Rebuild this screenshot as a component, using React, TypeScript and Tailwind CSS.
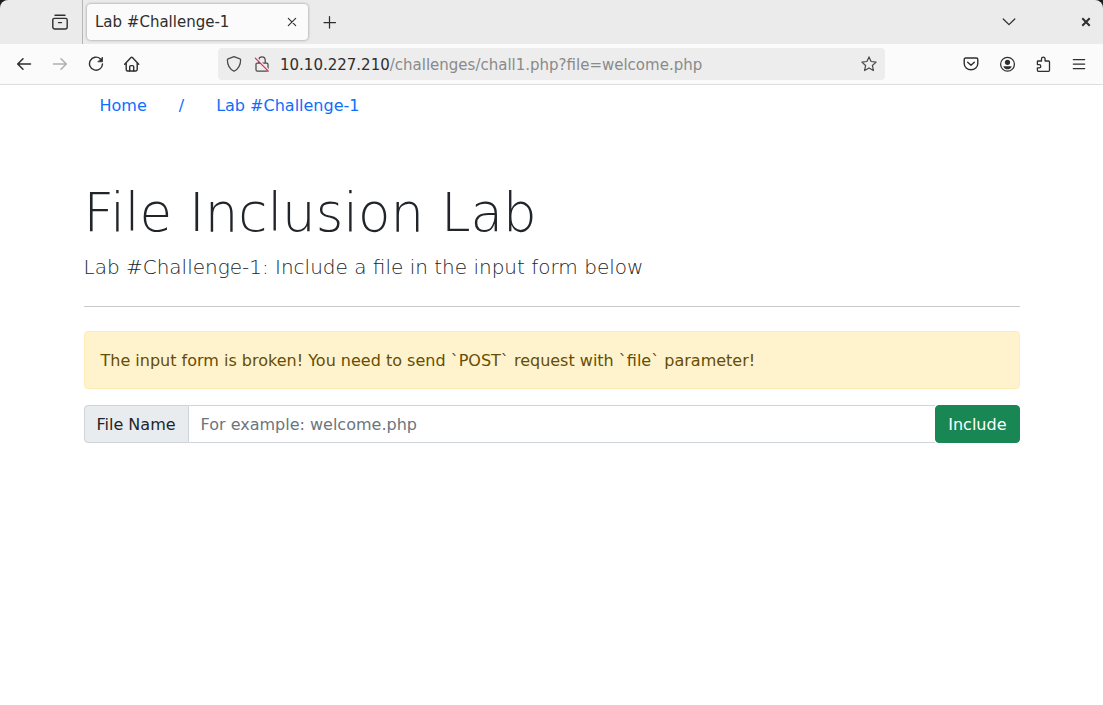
import type { ReactNode } from "react";

function Icon({ children, width = 1.25 }: { children: ReactNode; width?: number }) {
  return (
    <svg
      viewBox="0 0 16 16"
      className="size-4 shrink-0"
      fill="none"
      stroke="currentColor"
      strokeWidth={width}
      strokeLinecap="round"
      strokeLinejoin="round"
      aria-hidden="true"
    >
      {children}
    </svg>
  );
}

function ToolButton({ label, disabled, children }: { label: string; disabled?: boolean; children: ReactNode }) {
  return (
    <button
      type="button"
      aria-label={label}
      disabled={disabled}
      className="flex h-8 w-9 items-center justify-center text-[#2e2e2e] disabled:text-[#b0b0b0]"
    >
      {children}
    </button>
  );
}

function TabStrip() {
  return (
    <div className="bg-[#1c1c1c]">
      <div className="flex h-11 items-center rounded-t-lg bg-[#ebebeb] text-[#2e2e2e]">
        <div className="flex h-full w-[83px] items-center justify-end border-r border-[#b5b5b5] pr-[14px]">
          <button type="button" aria-label="Firefox View">
            <Icon width={1.4}>
              <path d="M3 1.200h10" />
              <path d="M.8 6a1.600 1.600 0 0 1 1.600-1.600h11.200A1.600 1.600 0 0 1 15.200 6v7a2 2 0 0 1-2 2H2.800a2 2 0 0 1-2-2z" />
              <path d="M6.500 8.600h3" />
            </Icon>
          </button>
        </div>
        <div className="ml-1 flex h-9 w-[221px] items-center justify-between rounded bg-[#fbfbfb] pr-2 pl-2 shadow-[0_0_3px_rgba(0,0,0,0.4)]">
          <span className="text-[15px] leading-5">Lab #Challenge-1</span>
          <button type="button" aria-label="Close tab">
            <Icon width={1.1}>
              <path d="M4.300 4.300l7.400 7.400M11.700 4.300l-7.400 7.400" />
            </Icon>
          </button>
        </div>
        <button type="button" aria-label="New tab" className="ml-[14px]">
          <Icon>
            <path d="M7.500 2.500v11.500M2 8.500h11.500" />
          </Icon>
        </button>
        <button type="button" aria-label="List all tabs" className="mr-[61px] ml-auto">
          <Icon>
            <path d="M2.200 5l5.800 5.600L13.800 5" />
          </Icon>
        </button>
        <button type="button" aria-label="Close window" className="mr-[9px]">
          <Icon width={2}>
            <path strokeLinecap="butt" d="M4.300 4.300l7.400 7.400M11.700 4.300l-7.400 7.400" />
          </Icon>
        </button>
      </div>
    </div>
  );
}

function Toolbar() {
  return (
    <div className="flex h-[41px] items-center border-b border-[#dedede] bg-[#fbfbfb] px-[6px]">
      <ToolButton label="Back">
        <Icon width={1.5}>
          <path d="M14.500 8H1.800M7 2.800L1.700 8 7 13.200" />
        </Icon>
      </ToolButton>
      <ToolButton label="Forward" disabled>
        <Icon width={1.5}>
          <path d="M1.500 8h12.700M9 2.800L14.300 8 9 13.200" />
        </Icon>
      </ToolButton>
      <ToolButton label="Reload">
        <Icon width={1.4}>
          <path d="M12.300 2.800A6.500 6.500 0 1 0 14.500 8" />
          <path d="M14.500 1.500v4.300h-4.300z" fill="currentColor" strokeWidth="0.8" />
        </Icon>
      </ToolButton>
      <ToolButton label="Home">
        <Icon width={1.4}>
          <path d="M.7 8.200L7 1.600a1 1 0 0 1 1.400 0L14.700 8.200M2.200 7v6.500A1.500 1.500 0 0 0 3.700 15h8a1.500 1.500 0 0 0 1.500-1.500V7" />
          <path d="M5.700 15v-4.200a1.200 1.200 0 0 1 1.200-1.200h1.600a1.200 1.200 0 0 1 1.200 1.200V15" />
        </Icon>
      </ToolButton>

      <div className="mx-[68px] flex h-8 min-w-0 flex-1 items-center rounded bg-[#ededed] px-2 text-[#4a4a4a]">
        <button type="button" aria-label="Tracking protection">
          <Icon>
            <path d="M8 .7L13.900 2.900a1 1 0 0 1 .7 1C14.600 9 12.300 13 8 15.300 3.700 13 1.400 9 1.400 3.900a1 1 0 0 1 .7-1z" />
          </Icon>
        </button>
        <button type="button" aria-label="Connection is not secure" className="ml-3">
          <Icon>
            <path d="M4.800 7V4a3.200 3.200 0 0 1 6.400 0V7M3.300 7h9.400A1.300 1.300 0 0 1 14 8.300v5.400a1.300 1.300 0 0 1-1.300 1.300H3.300A1.300 1.300 0 0 1 2 13.700V8.300A1.300 1.300 0 0 1 3.300 7z" />
            <path d="M2.400 1.800l12.800 12.800" stroke="#ededed" strokeWidth="1.600" />
            <path d="M1.300 2.100l13 13" stroke="#e22850" strokeWidth="1.200" />
          </Icon>
        </button>
        <div className="ml-[10px] flex-1 truncate pt-px text-[15px] leading-[26px] text-[#8a8a8a]">
          <span className="text-[#2e2e2e]">10.10.227.210</span>/challenges/chall1.php?file=welcome.php
        </div>
        <button type="button" aria-label="Bookmark this page">
          <Icon>
            <path d="M8 .9l2.100 4.600 5 .6-3.700 3.400 1 5L8 12l-4.400 2.500 1-5L.9 6.100l5-.6z" />
          </Icon>
        </button>
      </div>

      <ToolButton label="Save to Pocket">
        <Icon width={1.4}>
          <path d="M2.600 2h10.800A1.400 1.400 0 0 1 14.800 3.400V7.500a6.800 6.300 0 0 1-13.600 0V3.400A1.400 1.400 0 0 1 2.600 2z" />
          <path d="M4.700 6.300L8 9.300l3.300-3" />
        </Icon>
      </ToolButton>
      <ToolButton label="Account">
        <Icon>
          <circle cx="8.500" cy="8.300" r="6.900" />
          <circle cx="8.500" cy="6.300" r="2.600" fill="currentColor" stroke="none" />
          <path d="M4.800 10.200h7.400c.4 0 .5.300.3.700-1 1.600-2.300 2.300-4 2.300s-3-.7-4-2.300c-.2-.4-.1-.7.300-.7z" fill="currentColor" stroke="none" />
        </Icon>
      </ToolButton>
      <ToolButton label="Extensions">
        <Icon width={1.3}>
          <path d="M3 5h3.500V3a1.800 1.800 0 0 1 3.600 0v2h3.400a1 1 0 0 1 1 1v8.300a1 1 0 0 1-1 1H3.400a1 1 0 0 1-1-1v-2.500h1.800a1.600 1.600 0 0 0 0-3.200H2.400V5.600A.6.600 0 0 1 3 5z" />
        </Icon>
      </ToolButton>
      <ToolButton label="Open application menu">
        <Icon>
          <path d="M2.300 3.500h11.400M2.300 8h11.400M2.300 12.500h11.400" />
        </Icon>
      </ToolButton>
    </div>
  );
}

export default function App() {
  return (
    <div className="min-h-screen bg-white font-['DejaVu_Sans',sans-serif] text-base leading-[25px] text-[#212529]">
      <header>
        <TabStrip />
        <Toolbar />
      </header>
      <main className="mx-auto max-w-[960px] px-3">
        <nav aria-label="Breadcrumb" className="flex text-[#0d6efd]">
          <a href="#home" className="px-4 py-2">Home</a>
          <a href="#separator" className="px-4 py-2">/</a>
          <a href="#lab" className="px-4 py-2">Lab #Challenge-1</a>
        </nav>

        <h1 className="mt-[54px] text-[53px] leading-[66px] font-extralight">File Inclusion Lab</h1>
        <p className="mt-[6px] text-xl leading-[30px] font-extralight">
          Lab #Challenge-1: Include a file in the input form below
        </p>
        <hr className="my-6 border-[#c8c9ca]" />

        <div
          role="alert"
          className="flex min-h-[58px] items-center rounded border border-[#ffecb5] bg-[#fff3cd] px-4 py-2 text-[#664d03]"
        >
          The input form is broken! You need to send `POST` request with `file` parameter!
        </div>

        <form className="mt-4 flex h-[38px]" onSubmit={(event) => event.preventDefault()}>
          <label htmlFor="file" className="flex items-center rounded-l border border-[#ced4da] bg-[#e9ecef] px-3">
            File Name
          </label>
          <input
            id="file"
            name="file"
            type="text"
            placeholder="For example: welcome.php"
            className="min-w-0 flex-1 border-y border-[#ced4da] bg-white px-3 outline-none placeholder:text-[#6c757d]"
          />
          <button type="submit" className="rounded border border-[#198754] bg-[#198754] px-3 text-white">
            Include
          </button>
        </form>
      </main>
    </div>
  );
}
